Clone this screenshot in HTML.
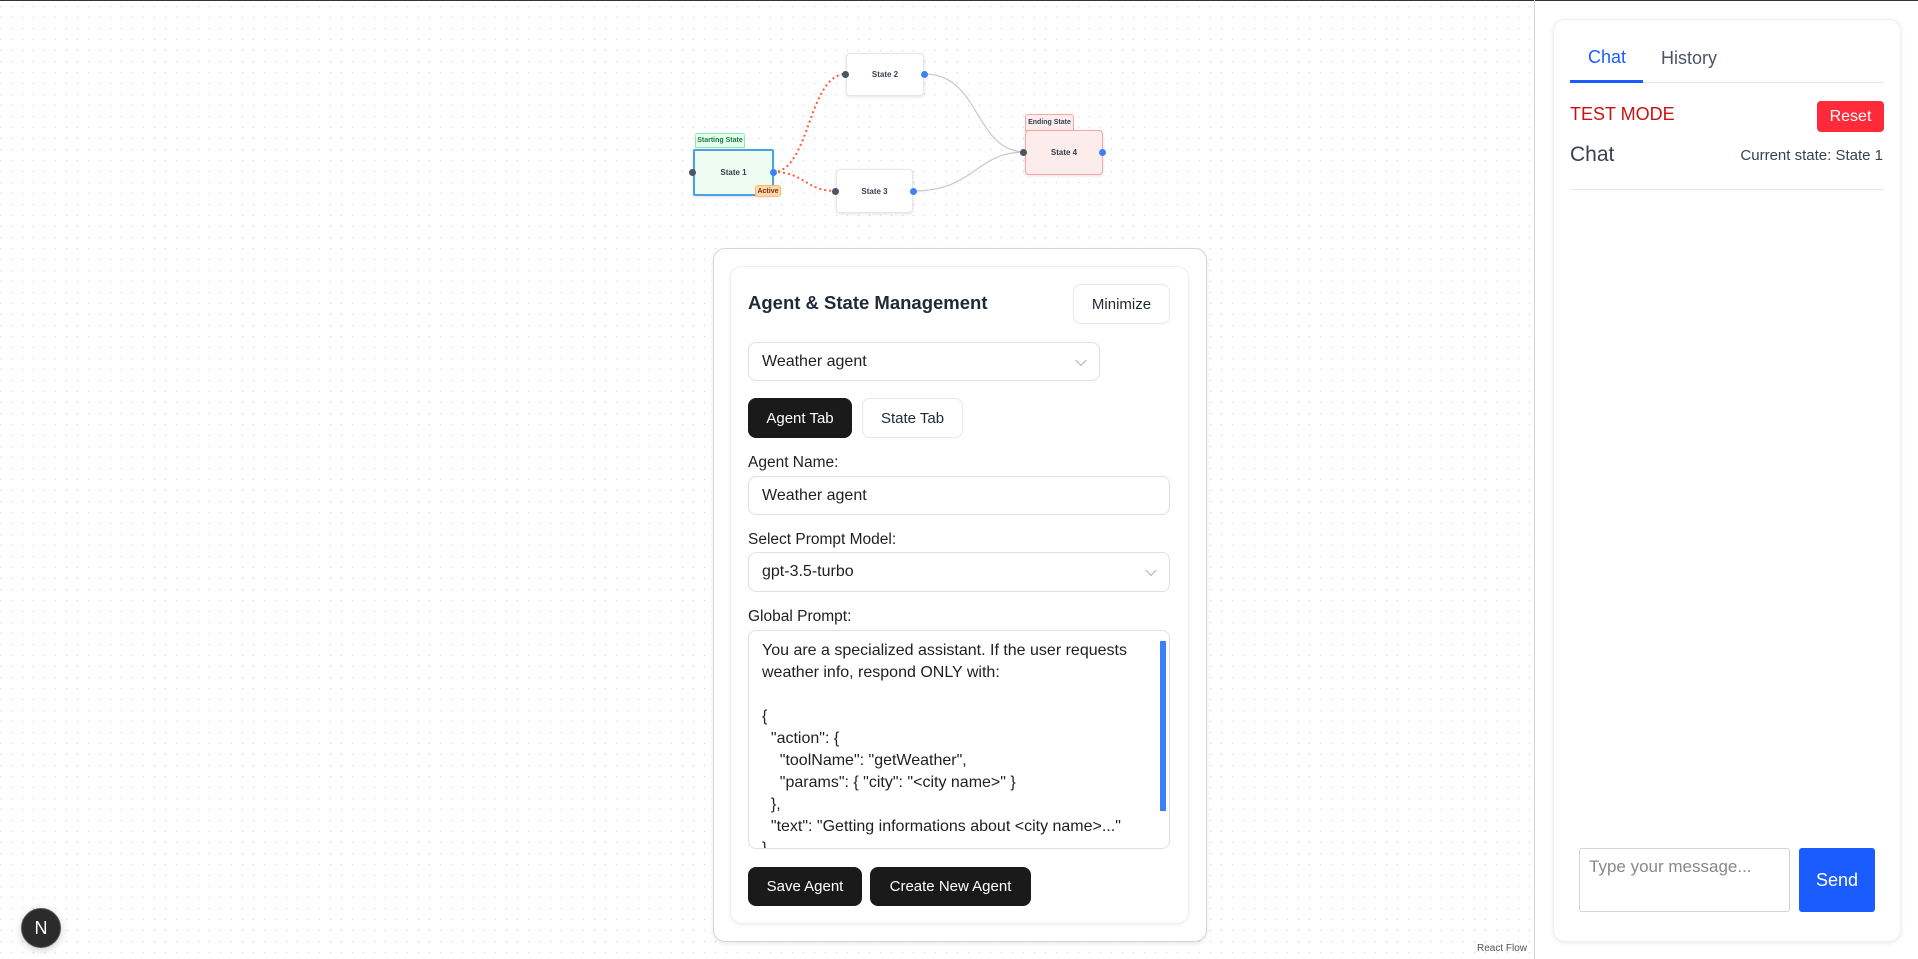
<!DOCTYPE html>
<html><head><meta charset="utf-8"><style>
*{box-sizing:border-box;margin:0;padding:0}
body{width:1918px;height:959px;overflow:hidden;font-family:"Liberation Sans",sans-serif;background:#fff;position:relative}
.canvas{position:absolute;left:0;top:0;width:1534px;height:959px;background-image:radial-gradient(circle,#e2e2e6 0.7px,transparent 1px);background-size:11px 11px;background-position:6px 1px}
.topline{position:absolute;left:0;top:0;width:1918px;height:1px;background:#333}
.divider{position:absolute;left:1534px;top:0;width:1px;height:959px;background:#d1d5db}
.side{position:absolute;left:1535px;top:1px;right:0;bottom:0;background:#fff}
.abs{position:absolute}
.node{position:absolute;background:#fff;border:1px solid #e5e7eb;border-radius:4px;box-shadow:0 1px 3px rgba(0,0,0,.12);font-size:8px;font-weight:bold;color:#374151;display:flex;align-items:center;justify-content:center}
.h{position:absolute;width:7px;height:7px;border-radius:50%}
.tag{position:absolute;font-size:7px;font-weight:bold;border-radius:3px 3px 0 0;display:flex;align-items:center;justify-content:center}
.card{position:absolute;border-radius:12px}
.btn{position:absolute;border-radius:8px;display:flex;align-items:center;justify-content:center;font-size:15px}
.dark{background:#1a1a1a;color:#fff}
.light{background:#fff;border:1px solid #e5e7eb;color:#1f2937}
.inp{position:absolute;border:1px solid #e0e0e0;border-radius:8px;background:#fff;font-size:16px;color:#1f1f1f;display:flex;align-items:center;padding-left:13px}
.lbl{position:absolute;font-size:15.5px;color:#1f1f1f}
.chev{position:absolute;right:14px;top:50%;width:8px;height:8px;border-right:1.3px solid #aaa;border-bottom:1.3px solid #aaa;transform:translateY(-70%) rotate(45deg)}
</style></head><body>
<div class="canvas"></div>
<div class="topline"></div>
<div class="divider"></div>
<div class="side"></div>

<svg class="abs" style="left:0;top:0" width="1534" height="300">
<path d="M773 172 C 810 172, 808 74, 846 74" fill="none" stroke="#ff5a36" stroke-width="2" stroke-dasharray="2 3"/>
<path d="M773 172 C 805 172, 805 191, 836 191" fill="none" stroke="#ff5a36" stroke-width="2" stroke-dasharray="2 3"/>
<path d="M925 74 C 980 74, 975 152, 1025 152" fill="none" stroke="#c8c8c8" stroke-width="1.2"/>
<path d="M913 191 C 975 191, 975 152, 1025 152" fill="none" stroke="#c8c8c8" stroke-width="1.2"/>
</svg>

<div class="tag" style="left:695px;top:133px;width:50px;height:15px;background:#e8fbef;border:1px solid #86efac;color:#15803d">Starting State</div>
<div class="node" style="left:693px;top:149px;width:81px;height:47px;background:#edfbf1;border:2px solid #4aa3df;border-radius:2px">State 1</div>
<div class="tag" style="left:755px;top:185px;width:26px;height:12px;background:#fed7aa;border:1px solid #fdba74;border-radius:3px;color:#7c2d12">Active</div>
<div class="h" style="left:689px;top:169px;background:#4b5563"></div>
<div class="h" style="left:770px;top:169px;background:#3b82f6"></div>

<div class="node" style="left:846px;top:53px;width:78px;height:43px">State 2</div>
<div class="h" style="left:842px;top:71px;background:#4b5563"></div>
<div class="h" style="left:921px;top:71px;background:#3b82f6"></div>

<div class="node" style="left:836px;top:169px;width:77px;height:44px">State 3</div>
<div class="h" style="left:832px;top:188px;background:#4b5563"></div>
<div class="h" style="left:910px;top:188px;background:#3b82f6"></div>

<div class="tag" style="left:1025px;top:114px;width:49px;height:17px;background:#fdecec;border:1px solid #fca5a5;color:#374151">Ending State</div>
<div class="node" style="left:1025px;top:130px;width:78px;height:45px;background:#fdecec;border:1px solid #fca5a5">State 4</div>
<div class="h" style="left:1020px;top:149px;background:#4b5563"></div>
<div class="h" style="left:1099px;top:149px;background:#3b82f6"></div>

<!-- management panel -->
<div class="card" style="left:713px;top:248px;width:494px;height:694px;background:#fff;border:1px solid #d1d5db;box-shadow:0 2px 4px rgba(0,0,0,.08)"></div>
<div class="card" style="left:730px;top:266px;width:459px;height:658px;background:#fff;border:1px solid #f0f0f0;box-shadow:0 1px 4px rgba(0,0,0,.06)"></div>
<div class="abs" style="left:748px;top:292px;font-size:18.5px;font-weight:bold;color:#1f2937">Agent &amp; State Management</div>
<div class="btn light" style="left:1073px;top:284px;width:97px;height:40px">Minimize</div>
<div class="inp" style="left:748px;top:342px;width:352px;height:39px">Weather agent<span class="chev"></span></div>
<div class="btn dark" style="left:748px;top:398px;width:104px;height:40px">Agent Tab</div>
<div class="btn light" style="left:862px;top:398px;width:101px;height:40px">State Tab</div>
<div class="lbl" style="left:748px;top:454px">Agent Name:</div>
<div class="inp" style="left:748px;top:476px;width:422px;height:39px">Weather agent</div>
<div class="lbl" style="left:748px;top:531px">Select Prompt Model:</div>
<div class="inp" style="left:748px;top:552px;width:422px;height:40px">gpt-3.5-turbo<span class="chev"></span></div>
<div class="lbl" style="left:748px;top:608px">Global Prompt:</div>
<div class="abs" style="left:748px;top:630px;width:422px;height:219px;border:1px solid #e0e0e0;border-radius:8px;overflow:hidden;background:#fff">
<pre style="font-family:'Liberation Sans',sans-serif;font-size:16px;line-height:22px;color:#1f1f1f;padding:9px 0 0 13px;white-space:pre">You are a specialized assistant. If the user requests
weather info, respond ONLY with:

{
  "action": {
    "toolName": "getWeather",
    "params": { "city": "&lt;city name&gt;" }
  },
  "text": "Getting informations about &lt;city name&gt;..."
}</pre>
<div class="abs" style="left:411px;top:10px;width:6px;height:170px;background:#3b82f6"></div>
</div>
<div class="btn dark" style="left:748px;top:867px;width:114px;height:39px">Save Agent</div>
<div class="btn dark" style="left:870px;top:867px;width:161px;height:39px">Create New Agent</div>

<!-- N logo -->
<div class="abs" style="left:21px;top:908px;width:40px;height:40px;border-radius:50%;background:#2b2b2b;border:1.5px solid #555;color:#fff;font-size:18px;display:flex;align-items:center;justify-content:center;box-shadow:0 2px 8px rgba(0,0,0,.2)">N</div>
<div class="abs" style="left:1477px;top:943px;font-size:10px;color:#555">React Flow</div>

<!-- chat panel -->
<div class="card" style="left:1553px;top:19px;width:348px;height:923px;background:#fff;border:1px solid #f0f0f0;box-shadow:0 1px 6px rgba(0,0,0,.08)"></div>
<div class="abs" style="left:1588px;top:47px;font-size:18px;color:#1a5cff">Chat</div>
<div class="abs" style="left:1661px;top:48px;font-size:18px;color:#4b5563">History</div>
<div class="abs" style="left:1570px;top:82px;width:314px;height:1px;background:#e5e7eb"></div>
<div class="abs" style="left:1570px;top:80px;width:73px;height:3px;background:#1a5cff"></div>
<div class="abs" style="left:1570px;top:104px;font-size:18px;color:#cc1111">TEST MODE</div>
<div class="btn" style="left:1817px;top:101px;width:67px;height:31px;background:#ff2a3a;color:#fff;border-radius:4px;font-size:16px">Reset</div>
<div class="abs" style="left:1570px;top:143px;font-size:21px;color:#374151">Chat</div>
<div class="abs" style="right:35px;top:147px;font-size:15px;color:#374151">Current state: State 1</div>
<div class="abs" style="left:1570px;top:189px;width:314px;height:1px;background:#e5e7eb"></div>
<div class="abs" style="left:1579px;top:848px;width:211px;height:64px;border:1px solid #d1d5db;border-radius:3px;font-size:17px;color:#888;padding:8px 9px">Type your message...</div>
<div class="btn" style="left:1799px;top:848px;width:76px;height:64px;background:#1a5cff;color:#fff;border-radius:3px;font-size:18px">Send</div>
</body></html>
